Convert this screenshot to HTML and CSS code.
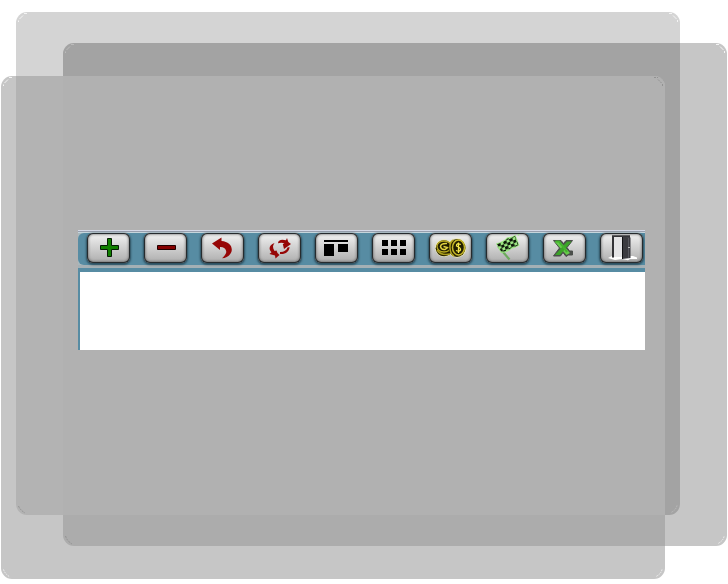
FILE: index.html
```
<!DOCTYPE html>
<html lang="en">
<head>
<meta charset="utf-8">
<title>Toolbar</title>
<link rel="stylesheet" href="styles.css">
</head>
<body>
<main class="desktop">
  <div class="pane pane-a"></div>
  <div class="pane pane-b"></div>
  <div class="pane pane-ab"></div>
  <div class="pane pane-c"></div>
  <div class="pane pane-ac"></div>
  <div class="pane pane-bc"></div>
  <div class="pane pane-abc"></div>
  <svg class="corners" width="728" height="584" viewBox="0 0 728 584">
    <defs>
      <g id="arcs">
        <path d="M2.500 10V8.500M3.500 7L7 3.500M8 1.500H11"/>
      </g>
    </defs>
    <use href="#arcs" class="arc-light" x="16" y="12"/>
    <use href="#arcs" class="arc-mid" x="63" y="43"/>
    <use href="#arcs" class="arc-light" x="1" y="76"/>
    <path class="arc-light" d="M669 13.500H672M673 15.500L676.500 19M677.500 20V22M716 44.500H719M720 46.500L723.500 50M724.500 51V53"/>
    <path class="arc-light dots" d="M724 536.500Q723 541 718 543.500M3.500 569.500Q5 574 10 577M662 569.500Q661 574 656 576.500"/>
    <path class="arc-mid dots" d="M677 505.500Q676 510 671 512.500"/>
    <path class="arc-dark" d="M654 77.500H658M658 79.500L661.500 83M662.500 84V86M18.500 506Q20 510 25 513M65.500 536Q67 541 72 544"/>
  </svg>
  <section class="window">
    <div class="toolbar">
      <button class="tool" aria-label="Add"><svg viewBox="0 0 43 30"><path d="M20.500 5.500h4v7h7v4h-7v7h-4v-7h-7v-4h7z" fill="#118000" stroke="#061c04"/></svg></button>
      <button class="tool" aria-label="Remove"><svg viewBox="0 0 43 30"><path d="M13.500 12.500h18v4h-18z" fill="#850000" stroke="#210000"/></svg></button>
      <button class="tool" aria-label="Undo"><svg viewBox="0 0 43 30"><path d="M11 10.500L20.500 4.500V8C27 8.500 31 12 30.800 17C30.500 21.500 26 25 21 25.300C24 22.500 26 20 25 17.500C24.300 15 22 13.800 19 14V17z" fill="#960606"/></svg></button>
      <button class="tool" aria-label="Refresh"><svg viewBox="0 0 43 30"><g fill="#960606"><path d="M20 10.300C20 7 23.500 6 28 7.300L29 5L30.300 9L33 11L26 16L24.800 11L26.500 10.800C25 9.500 22.500 9.500 20 10.300z"/><path d="M16.500 10C14.500 12.500 14.500 15 16.500 18L18.500 17.500L19.500 20L21.500 22L17.500 25.500L17 22.500L11.500 21L13.500 19.300C10 16 11.500 11.500 16.500 10z"/><path d="M31.500 14C31.500 18.500 27.500 21.500 22 21V19C25.500 19.300 28.500 17.500 29.500 14.500z"/></g></svg></button>
      <button class="tool" aria-label="Layout"><svg viewBox="0 0 43 30"><path d="M9 7h24v2H9zM9 11h10v12H9zM23 11h10v8H23z"/></svg></button>
      <button class="tool" aria-label="Grid"><svg viewBox="0 0 43 30"><path d="M10 7h6v6h-6zM19 7h6v6h-6zM28 7h6v6h-6zM10 16h6v6h-6zM19 16h6v6h-6zM28 16h6v6h-6z"/></svg></button>
      <button class="tool" aria-label="Payments"><svg viewBox="0 0 43 30"><ellipse cx="15" cy="15" rx="9" ry="8.800" fill="#f1edb5"/><ellipse cx="28" cy="15" rx="9.300" ry="9.700" fill="#f1edb5"/><ellipse cx="15" cy="15.300" rx="8.300" ry="8" fill="#211d00"/><path d="M8 17Q12 23 21 21" fill="none" stroke="#aa9d1c" stroke-width="1.500"/><ellipse cx="15" cy="13.500" rx="7" ry="5.500" fill="#211d00" stroke="#b9aa20" stroke-width="1.300"/><path d="M18 10.500Q12 10 11.500 13.500Q12 17 16 16.500L18.500 14.500L14.500 13.500" fill="none" stroke="#e2d442" stroke-width="1.500"/><ellipse cx="28" cy="15" rx="8.500" ry="9" fill="#282300"/><path d="M24.500 7Q20.500 9 21 15Q21.300 21 25 23" fill="none" stroke="#b3a51f" stroke-width="1.500"/><ellipse cx="29.500" cy="14.500" rx="6" ry="7.500" fill="#201d00" stroke="#c6b728" stroke-width="1.500"/><path d="M31.800 11.500Q27.200 9.500 27.500 13Q31.800 14.500 31.500 17Q30.500 19 27 17.500M29.500 9.500V20" fill="none" stroke="#f5e84b" stroke-width="1.300"/></svg></button>
      <button class="tool" aria-label="Finish"><svg viewBox="0 0 43 30"><defs><pattern id="check" width="6" height="6" patternUnits="userSpaceOnUse" patternTransform="translate(11 11) skewY(-22) skewX(16)"><path d="M0 0h3.200v3.200H0zM3 3h3.200v3.200H3z" fill="#0d190a"/></pattern></defs><path d="M12 13L17 19L23.500 26.500" fill="none" stroke="#6cab5d" stroke-width="2.200"/><path id="cloth" d="M10 10.500Q17 9 21 4.500Q26 4 29.500 2L33.500 12.500Q29 15 26 15.500Q22 19.500 15 20z" fill="#9be682"/><path d="M11 11Q18 9.500 21.500 5.500Q26 5 29 3L32.500 12Q29 14 25.500 14.500Q21.500 18.500 15.500 19z" fill="url(#check)"/><circle cx="32.500" cy="1.800" r=".8" fill="#97e67d"/></svg></button>
      <button class="tool" aria-label="Export to spreadsheet"><svg viewBox="0 0 43 30"><path d="M10.500 7.500H18L20.500 10.500L23 7.500H29.500L24 14.500L26.500 18H29.500V22H25.500L23 23.500L20 19.500L17.500 23H10.500L16.500 15z" fill="#4b4f4b" stroke="#4b4f4b"/><path d="M11.500 8.500H17L27 20L23.500 22z" fill="#65cc4a"/><path d="M24 8.500H28.500L17 22H12z" fill="#3ca329"/><path d="M12.500 8.500H16L24 19" fill="none" stroke="#43b22d" stroke-width="2"/></svg></button>
      <button class="tool" aria-label="Exit"><svg viewBox="0 0 43 30"><path d="M8 25L12 23H33L37 24.500V26L30 26L28 27.300L22 26L15 27z" fill="#fff"/><path d="M12 2.300H30V5L22 4H14V24.500H12z" fill="#333337"/><path d="M14 4H22V24H14z" fill="#e4e4e6"/><path d="M22 3.500L30.500 4.500V25L22 26z" fill="#3b3b40"/><path d="M28.500 5V25" stroke="#58585f"/><path d="M22.500 4V26" stroke="#101012"/><path d="M28 14.500h2" stroke="#bbb"/></svg></button>
    </div>
    <div class="divider"></div>
    <div class="content"></div>
  </section>
</main>
</body>
</html>
```

FILE: styles.css
```
body {
  margin: 0;
  background: #fff;
  font-family: "Liberation Sans", sans-serif;
}
.desktop {
  position: relative;
  width: 728px;
  height: 584px;
  overflow: hidden;
}
.pane {
  position: absolute;
  box-sizing: border-box;
}
.pane-a { left: 16px; top: 12px; width: 664px; height: 503px; background: #d4d4d4; border-radius: 11px; }
.pane-b { left: 63px; top: 43px; width: 664px; height: 503px; background: #c6c6c6; border-radius: 11px; }
.pane-ab { left: 63px; top: 43px; width: 617px; height: 472px; background: #a3a3a3; border-radius: 11px 0 11px 0; }
.pane-c { left: 1px; top: 76px; width: 664px; height: 503px; background: #c6c6c6; border-radius: 11px; }
.pane-ac { left: 16px; top: 76px; width: 649px; height: 439px; background: #b3b3b3; border-radius: 0 11px 0 11px; }
.pane-bc { left: 63px; top: 76px; width: 602px; height: 470px; background: #acacac; border-radius: 0 11px 0 11px; }
.pane-abc { left: 63px; top: 76px; width: 602px; height: 439px; background: #b1b1b1; border-radius: 0 11px 0 0; }
.corners {
  position: absolute;
  inset: 0;
  fill: none;
}
.arc-light { stroke: #f4f4f4; }
.arc-mid { stroke: #c4c4c4; opacity: .7; }
.arc-dark { stroke: #929292; stroke-dasharray: 2 1; }
.dots { stroke-dasharray: 1.5 1; }
.window {
  position: absolute;
  left: 78px;
  top: 230px;
  width: 567px;
  height: 120px;
  overflow: hidden;
  display: flex;
  flex-direction: column;
  background: #a9b8bd;
}
.toolbar {
  box-sizing: border-box;
  flex: 0 0 35px;
  display: flex;
  align-items: flex-start;
  gap: 14px;
  padding: 3px 0 0 9px;
  position: relative;
  z-index: 0;
  background: linear-gradient(#d5d9e7 0 1px, #989fae 1px 2px, #c5d5dc 2px 3px, #a9b8bd 3px);
}
.toolbar::before {
  content: "";
  position: absolute;
  inset: 3px 0 0;
  z-index: -1;
  background: #578ca3;
  border-radius: 6px 0 0 6px;
}
.tool {
  box-sizing: border-box;
  flex: 0 0 43px;
  height: 30px;
  padding: 0;
  border: 0;
  border-radius: 6px;
  background: linear-gradient(#f5f5f5, #dadada 35%, #acacac);
  box-shadow: inset 0 0 0 1px #262b2e, inset 0 0 3px 1px #4c4c4c, 0 1px 2px 1px rgba(16, 36, 46, .6);
}
.tool svg {
  display: block;
  width: 43px;
  height: 30px;
}
.divider {
  flex: 0 0 7px;
  background: linear-gradient(#a4b0b5 0 3px, #578ca3 3px);
}
.content {
  flex: 1;
  border-left: 2px solid #578ca3;
  background: #fff;
}
```
